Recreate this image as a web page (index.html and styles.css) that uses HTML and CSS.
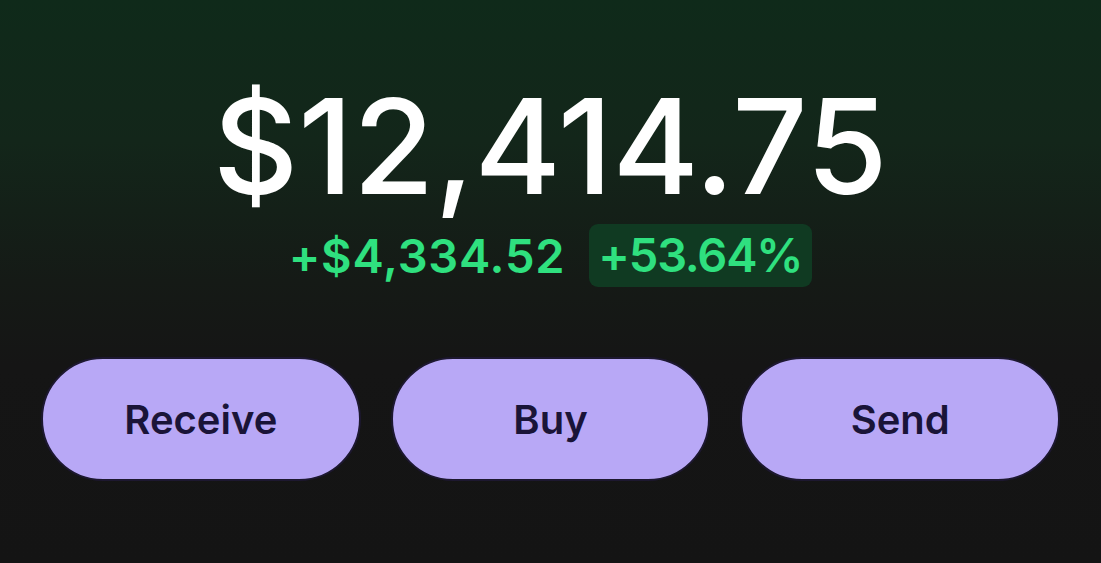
FILE: index.html
```html
<!DOCTYPE html>
<html lang="en">
	<head>
		<meta charset="utf-8">

		<title>Wallet</title>

		<link rel="stylesheet" href="styles.css">
	</head>
	<body>
	<div class="wallet">
		<div class="balance">$12,414.75</div>

		<div class="change">
			<span class="change-amount">+$4,334.52</span>
			<span class="change-pct">+53.64%</span>
		</div>

		<div class="actions">
			<button class="action">Receive</button>
			<button class="action">Buy</button>
			<button class="action">Send</button>
		</div>
	</div>
	</body>
</html>
```

FILE: styles.css
```css
html, body {
	margin: 0;
	height: 100%;
}

body {
	background: linear-gradient(180deg, #0f2a1a 0%, #13261a 25%, #151a16 50%, #151515 65%, #141414 100%);
	color: #fff;

	font-family: "Inter", "Noto Sans", sans-serif;
}

div.wallet
{
	display: flex;
	flex-direction: column;
	align-items: center;
	padding-top: 80px;
}

div.balance {
	font-size: 132px;
	font-weight: 500;
	line-height: 132px;
}

div.change {
	display: flex;
	align-items: center;
	gap: 24px;
	margin-top: 12px;

	color: #2fe07f;
	font-size: 47px;
	font-weight: 600;
	line-height: 54px;
}

span.change-amount {
	letter-spacing: 0.8px;
}

span.change-pct {
	background: #103a22;
	border-radius: 9px;
	padding: 4px 10px 5px 9px;
	letter-spacing: -1.2px;
}

div.actions {
	display: flex;
	gap: 30px;
	align-self: stretch;
	margin-top: 70px;
	padding: 0 41px;
}

button.action {
	flex: 1;
	height: 124px;

	background: #b8a8f6;
	color: #1a1438;
	border: 2px solid #1d1830;
	border-radius: 62px;

	font-family: inherit;
	font-size: 40px;
	font-weight: 600;
}
```
